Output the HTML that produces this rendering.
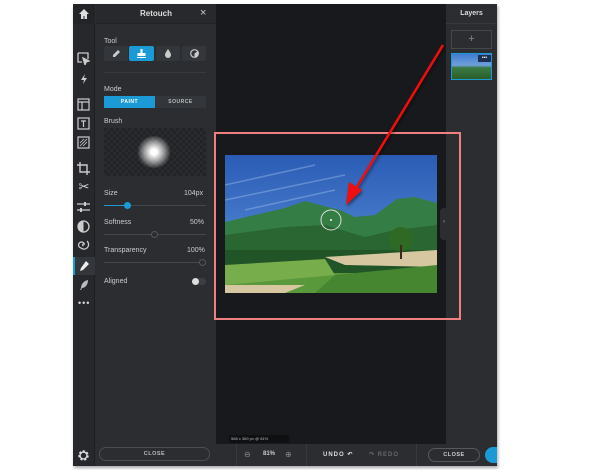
<!DOCTYPE html>
<html><head><style>
*{margin:0;padding:0;box-sizing:border-box}
body{width:600px;height:470px;background:#fff;position:relative;overflow:hidden;font-family:"Liberation Sans",sans-serif;}
.a{position:absolute}
.ic{position:absolute;left:78px;width:12px;height:12px;color:#d8d8d8;font-size:11px;text-align:center;line-height:12px}
.lbl{position:absolute;color:#ccc;font-size:7px}
.tb{position:absolute;top:46px;width:24px;height:15px;background:#33363b;border-radius:2px}
</style></head><body>
<div class="a" style="left:73px;top:4px;width:424px;height:462px;background:#2b2d31;box-shadow:1px 2px 3px rgba(0,0,0,.35)"></div>
<div class="a" style="left:73px;top:4px;width:22px;height:462px;background:#26282b;border-right:1px solid #1d1e21"></div>
<div class="a" style="left:73px;top:4px;width:22px;height:20px;background:#222427"></div>
<svg class="a" style="left:78px;top:8px" width="12" height="12" viewBox="0 0 12 12"><path d="M6 1L1 6h2v5h2.5V8h1v3H9V6h2z" fill="#ddd"/></svg>
<svg class="a" style="left:77px;top:52px" width="13" height="13" viewBox="0 0 13 13" fill="none" stroke="#ccc" stroke-width="1.3"><path d="M1 1h10v6M1 1v9h4"/><path d="M6 6l6 3-3 1-1 3z" fill="#ccc"/></svg>
<svg class="a" style="left:78px;top:73px" width="12" height="12" viewBox="0 0 12 12"><path d="M7 1L3 7h3l-1 4 4-6H6z" fill="#ccc"/></svg>
<svg class="a" style="left:77px;top:98px" width="13" height="13" viewBox="0 0 13 13" fill="none" stroke="#ccc" stroke-width="1.2"><rect x="1" y="1" width="11" height="11"/><path d="M1 4h11M5 4v8"/></svg>
<svg class="a" style="left:77px;top:117px" width="13" height="13" viewBox="0 0 13 13" fill="none" stroke="#ccc" stroke-width="1.2"><rect x="1" y="1" width="11" height="11"/><path d="M4 4h5M6.5 4v6"/></svg>
<svg class="a" style="left:77px;top:136px" width="13" height="13" viewBox="0 0 13 13" fill="none" stroke="#ccc" stroke-width="1.2"><rect x="1" y="1" width="11" height="11"/><path d="M3 10l7-7M3 7l4-4M6 10l4-4" stroke-width=".8"/></svg>
<svg class="a" style="left:77px;top:162px" width="13" height="13" viewBox="0 0 13 13" fill="none" stroke="#ccc" stroke-width="1.4"><path d="M3 0v10h10M0 3h10v10"/></svg>
<div class="ic" style="top:181px;font-size:13px">✂</div>
<svg class="a" style="left:77px;top:201px" width="13" height="12" viewBox="0 0 13 12" stroke="#ccc" stroke-width="1.3"><path d="M0 3h13M0 9h13"/><path d="M8 1v4M4 7v4" stroke-width="2"/></svg>
<svg class="a" style="left:77px;top:220px" width="13" height="13" viewBox="0 0 13 13"><circle cx="6.5" cy="6.5" r="5.5" fill="none" stroke="#ccc" stroke-width="1.3"/><path d="M6.5 1a5.5 5.5 0 0 0 0 11z" fill="#ccc"/></svg>
<svg class="a" style="left:77px;top:239px" width="13" height="13" viewBox="0 0 13 13" fill="none" stroke="#ccc" stroke-width="1.3"><path d="M6.5 7a1 1 0 1 1 1-1.5A3 3 0 1 0 4 9a4.5 4.5 0 1 0 6-7"/></svg>
<div class="a" style="left:73px;top:257px;width:22px;height:18px;background:#33363b"></div>
<div class="a" style="left:73px;top:257px;width:2px;height:18px;background:#1b9ad6"></div>
<svg class="a" style="left:78px;top:260px" width="12" height="12" viewBox="0 0 12 12"><path d="M8 1l3 3-6 6-3 1 1-3z" fill="#eee"/></svg>
<svg class="a" style="left:78px;top:279px" width="12" height="12" viewBox="0 0 12 12"><path d="M10 1C5 2 3 6 3 9l-1 2 1 0 1-2c3 0 6-3 6-8z" fill="#bbb"/></svg>
<div class="ic" style="top:297px;font-size:9px;letter-spacing:1px">•••</div>
<svg class="a" style="left:77px;top:449px" width="13" height="13" viewBox="0 0 13 13"><circle cx="6.5" cy="6.5" r="4" fill="none" stroke="#ddd" stroke-width="2.5" stroke-dasharray="2 1.6"/><circle cx="6.5" cy="6.5" r="3.5" fill="none" stroke="#ddd" stroke-width="1.3"/></svg>
<div class="a" style="left:96px;top:4px;width:120px;height:462px;background:#2b2d31"></div>
<div class="a" style="left:96px;top:4px;width:120px;height:20px;background:#27292d;border-bottom:1px solid #222"></div>
<div class="a" style="left:96px;top:9px;width:120px;text-align:center;color:#ddd;font-size:8px;font-weight:bold">Retouch</div>
<div class="a" style="left:200px;top:7px;color:#ccc;font-size:11px">×</div>
<div class="lbl" style="left:104px;top:38px">Tool</div>
<div class="tb" style="left:104px"></div><div class="tb" style="left:129px;width:25px;background:#1b9ad6"></div><div class="tb" style="left:156px"></div><div class="tb" style="left:182px"></div>
<svg class="a" style="left:112px;top:49px" width="9" height="9" viewBox="0 0 9 9"><path d="M6 1l2 2-5 5H1V6z" fill="#ccc"/></svg>
<svg class="a" style="left:137px;top:49px" width="9" height="9" viewBox="0 0 9 9"><path d="M3.5 0h2v4h3v3h-8V4h3zM0 8h9v1H0z" fill="#fff"/></svg>
<svg class="a" style="left:164px;top:49px" width="8" height="9" viewBox="0 0 8 9"><path d="M4 0C2 3 1 4.5 1 6a3 3 0 0 0 6 0C7 4.5 6 3 4 0z" fill="#ccc"/></svg>
<svg class="a" style="left:190px;top:49px" width="9" height="9" viewBox="0 0 9 9"><circle cx="4.5" cy="4.5" r="3.8" fill="none" stroke="#ccc" stroke-width="1.2"/><path d="M4.5 4.5L8 2A4 4 0 0 1 4.5 8.3z" fill="#ccc"/></svg>
<div class="a" style="left:104px;top:72px;width:102px;height:1px;background:#36393e"></div>
<div class="lbl" style="left:104px;top:86px">Mode</div>
<div class="a" style="left:104px;top:96px;width:51px;height:12px;background:#1b9ad6;color:#fff;font-size:5px;font-weight:bold;text-align:center;line-height:12px;letter-spacing:.5px">PAINT</div>
<div class="a" style="left:155px;top:96px;width:51px;height:12px;background:#33363b;color:#bbb;font-size:5px;font-weight:bold;text-align:center;line-height:12px;letter-spacing:.5px">SOURCE</div>
<div class="lbl" style="left:104px;top:118px">Brush</div>
<div class="a" style="left:104px;top:128px;width:102px;height:48px;background-color:#222326;background-image:linear-gradient(45deg,#2a2b2e 25%,transparent 25%,transparent 75%,#2a2b2e 75%),linear-gradient(45deg,#2a2b2e 25%,transparent 25%,transparent 75%,#2a2b2e 75%);background-size:6px 6px;background-position:0 0,3px 3px"></div>
<div class="a" style="left:136px;top:136px;width:36px;height:32px;border-radius:50%;background:radial-gradient(circle,#fff 0%,#fff 12%,rgba(255,255,255,.55) 40%,rgba(255,255,255,0) 70%)"></div>
<div class="lbl" style="left:104px;top:190px">Size</div><div class="lbl" style="left:184px;top:190px">104px</div>
<div class="a" style="left:104px;top:205px;width:102px;height:1px;background:#44474c"></div>
<div class="a" style="left:104px;top:205px;width:23px;height:1px;background:#1b9ad6"></div>
<div class="a" style="left:124px;top:202px;width:7px;height:7px;border-radius:50%;background:#1b9ad6"></div>
<div class="lbl" style="left:104px;top:219px">Softness</div><div class="lbl" style="left:190px;top:219px">50%</div>
<div class="a" style="left:104px;top:234px;width:102px;height:1px;background:#44474c"></div>
<div class="a" style="left:151px;top:231px;width:7px;height:7px;border-radius:50%;background:#2b2d31;border:1px solid #555"></div>
<div class="lbl" style="left:104px;top:247px">Transparency</div><div class="lbl" style="left:187px;top:247px">100%</div>
<div class="a" style="left:104px;top:262px;width:102px;height:1px;background:#44474c"></div>
<div class="a" style="left:199px;top:259px;width:7px;height:7px;border-radius:50%;background:#2b2d31;border:1px solid #555"></div>
<div class="lbl" style="left:104px;top:278px">Aligned</div>
<div class="a" style="left:192px;top:278px;width:14px;height:7px;border-radius:4px;background:#3a3d42"></div>
<div class="a" style="left:192px;top:278px;width:7px;height:7px;border-radius:50%;background:#ddd"></div>
<div class="a" style="left:99px;top:447px;width:111px;height:14px;border:1px solid #4a4d52;border-radius:7px;color:#bbb;font-size:5.5px;font-weight:bold;text-align:center;line-height:12px;letter-spacing:.5px">CLOSE</div>
<div class="a" style="left:216px;top:4px;width:230px;height:440px;background:#18191c"></div>
<div class="a" style="left:229px;top:435px;width:60px;height:8px;background:#0f1012;color:#bbb;font-size:4px;line-height:8px;padding-left:2px">568 x 369 px @ 81%</div>
<svg class="a" style="left:225px;top:155px" width="212" height="138" viewBox="0 0 212 138">
<defs><linearGradient id="s" x1="0" y1="0" x2="0" y2="1"><stop offset="0" stop-color="#2a5cb5"/><stop offset="1" stop-color="#5f95dc"/></linearGradient></defs>
<rect width="212" height="138" fill="url(#s)"/>
<path d="M0 30L90 10M0 45L120 20M20 55L110 35" stroke="#a8c4ee" stroke-width="1.5" opacity=".4"/>
<path d="M0 67L30 60 60 53 80 46 95 50 115 55 130 62 150 60 172 44 190 42 212 48V138H0z" fill="#347e45"/>
<path d="M0 80L60 72 100 70 140 82 170 75 212 70V138H0z" fill="#2a6632"/>
<path d="M0 95H212V138H0z" fill="#215527"/>
<path d="M0 118H212V138H0z" fill="#5a983c"/>
<path d="M100 102L212 95V112L120 110z" fill="#d6c7a0"/>
<path d="M0 110L100 104 110 120 0 130z" fill="#78ad4c"/>
<path d="M0 130H80L60 138H0z" fill="#d6c7a0"/>
<path d="M110 120L212 110V138H90z" fill="#468630"/>
<circle cx="176" cy="84" r="12" fill="#2f6a25"/><rect x="175" y="90" width="2" height="14" fill="#3b2a1a"/>
<circle cx="106" cy="65" r="10" fill="none" stroke="#ddd" stroke-width="1"/><circle cx="106" cy="65" r="1" fill="#fff"/>
</svg>
<div class="a" style="left:446px;top:4px;width:51px;height:440px;background:#2b2d31"></div>
<div class="a" style="left:440px;top:208px;width:8px;height:32px;background:#2b2d31;border-radius:4px 0 0 4px"></div>
<div class="a" style="left:443px;top:219px;color:#aaa;font-size:6px">›</div>
<div class="a" style="left:446px;top:4px;width:51px;height:20px;border-bottom:1px solid #36393e"></div>
<div class="a" style="left:446px;top:10px;width:51px;text-align:center;color:#ddd;font-size:7px;font-weight:bold">Layers</div>
<div class="a" style="left:451px;top:30px;width:41px;height:19px;border:1px solid #44474c;color:#888;font-size:11px;text-align:center;line-height:17px">+</div>
<div class="a" style="left:451px;top:53px;width:41px;height:27px;border:1px solid #1b9ad6;background:linear-gradient(#3f7bd0 0%,#6fa0da 45%,#3a7a45 55%,#2a5e2a 100%)"></div>
<div class="a" style="left:478px;top:55px;width:13px;height:7px;background:#1e3050;color:#fff;font-size:5px;text-align:center;line-height:6px">•••</div>
<div class="a" style="left:214px;top:132px;width:247px;height:188px;border:2px solid #f08080"></div>
<div class="a" style="left:216px;top:444px;width:281px;height:22px;background:#2b2d31"></div>
<div class="a" style="left:236px;top:444px;width:1px;height:22px;background:#36393e"></div>
<div class="a" style="left:306px;top:444px;width:1px;height:22px;background:#36393e"></div>
<div class="a" style="left:416px;top:444px;width:1px;height:22px;background:#36393e"></div>
<div class="a" style="left:244px;top:450px;color:#888;font-size:8px">⊖</div>
<div class="a" style="left:263px;top:451px;color:#ccc;font-size:6px;font-weight:bold">81%</div>
<div class="a" style="left:285px;top:450px;color:#888;font-size:8px">⊕</div>
<div class="a" style="left:323px;top:451px;color:#ddd;font-size:6px;font-weight:bold;letter-spacing:1px">UNDO ↶</div>
<div class="a" style="left:369px;top:451px;color:#666;font-size:6px;font-weight:bold;letter-spacing:1px">↷ REDO</div>
<div class="a" style="left:428px;top:448px;width:52px;height:14px;border:1px solid #55585d;border-radius:7px;color:#ccc;font-size:5.5px;font-weight:bold;text-align:center;line-height:12px;letter-spacing:.5px">CLOSE</div>
<div class="a" style="left:485px;top:447px;width:12px;height:16px;background:#1b9ad6;border-radius:8px 0 0 8px"></div>
<svg class="a" style="left:0;top:0" width="600" height="470"><defs><filter id="sh"><feDropShadow dx="1" dy="2" stdDeviation="1.5" flood-opacity=".5"/></filter></defs>
<g filter="url(#sh)"><path d="M443 45L355 190" stroke="#f01010" stroke-width="2.5"/><path d="M346 205L349 182 362 190z" fill="#f01010"/></g></svg>
</body></html>
